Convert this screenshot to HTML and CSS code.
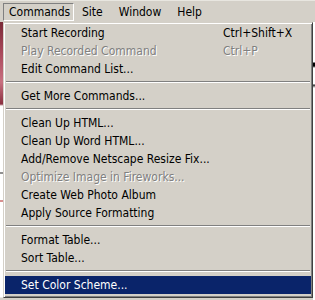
FILE: index.html
```html
<!DOCTYPE html>
<html lang="en">

<head>
  <meta charset="UTF-8">
  <meta name="viewport" content="width=device-width, initial-scale=1.0">
  <title>Commands Menu</title>
  <link rel="stylesheet" href="styles.css">
</head>

<body>
  <div class="menubar">
    <span class="menubar-item pressed">Commands</span>
    <span class="menubar-item">Site</span>
    <span class="menubar-item">Window</span>
    <span class="menubar-item">Help</span>
  </div>
  <div class="workspace">
    <div class="backdrop-left"></div>
    <div class="menu">
      <div class="menu-item"><span class="label">Start Recording</span><span class="shortcut">Ctrl+Shift+X</span></div>
      <div class="menu-item disabled"><span class="label">Play Recorded Command</span><span class="shortcut">Ctrl+P</span></div>
      <div class="menu-item"><span class="label">Edit Command List...</span></div>
      <div class="separator"></div>
      <div class="menu-item"><span class="label">Get More Commands...</span></div>
      <div class="separator"></div>
      <div class="menu-item"><span class="label">Clean Up HTML...</span></div>
      <div class="menu-item"><span class="label">Clean Up Word HTML...</span></div>
      <div class="menu-item"><span class="label">Add/Remove Netscape Resize Fix...</span></div>
      <div class="menu-item disabled"><span class="label">Optimize Image in Fireworks...</span></div>
      <div class="menu-item"><span class="label">Create Web Photo Album</span></div>
      <div class="menu-item"><span class="label">Apply Source Formatting</span></div>
      <div class="separator"></div>
      <div class="menu-item"><span class="label">Format Table...</span></div>
      <div class="menu-item"><span class="label">Sort Table...</span></div>
      <div class="separator"></div>
      <div class="menu-item selected"><span class="label">Set Color Scheme...</span></div>
    </div>
    <div class="backdrop-right"></div>
  </div>
</body>

</html>
```

FILE: styles.css
```css
* {
  box-sizing: border-box;
}

body {
  margin: 0;
  width: 315px;
  height: 300px;
  overflow: hidden;
  background: #d4d0c8;
  font-family: "DejaVu Sans Condensed", "DejaVu Sans", sans-serif;
  font-stretch: condensed;
  font-size: 12px;
  color: #000;
}

.menubar {
  display: flex;
  align-items: center;
  height: 22px;
  padding-left: 3px;
  background: #d4d0c8;
  border-top: 1px solid #e8e6e0;
}

.menubar-item {
  height: 18px;
  line-height: 16px;
  padding: 0 7px;
  border: 1px solid transparent;
}

.menubar-item.pressed {
  width: 71px;
  padding-left: 5px;
  border-color: #808080 #fff #fff #808080;
}

.workspace {
  display: flex;
  height: 278px;
}

.backdrop-left {
  width: 3px;
  background: linear-gradient(#7a2a38 0, #a8485a 30px, #c87080 60px, #8a3040 82px, #fff 84px, #fff 150px, #222 151px, #fff 152px, #fff 178px, #b02020 179px, #fff 180px, #fff 275px, #d4d0c8 276px);
}

.backdrop-right {
  width: 2px;
  background: linear-gradient(#fff 0, #fff 40px, #000 41px, #000 44px, #fff 46px, #fff 62px, #222 63px, #fff 66px);
}

.menu {
  width: 310px;
  height: 276px;
  padding: 1px;
  background: #d4d0c8;
  border: 1px solid;
  border-color: #d4d0c8 #404040 #404040 #d4d0c8;
  box-shadow: inset 1px 1px 0 #fff, inset -1px -1px 0 #808080;
}

.menu-item {
  display: flex;
  align-items: center;
  height: 18px;
  padding-left: 16px;
  white-space: nowrap;
}

.menu-item .label {
  flex: 1;
}

.menu-item .shortcut {
  width: 88px;
}

.menu-item.disabled {
  color: #808080;
  text-shadow: 1px 1px 0 #fff;
}

.menu-item.selected {
  background: #0a246a;
  color: #fff;
}

.separator {
  height: 9px;
  padding: 3px 1px 0;
}

.separator::before {
  content: "";
  display: block;
  height: 1px;
  background: #808080;
  border-bottom: 1px solid #fff;
  box-sizing: content-box;
}
```
